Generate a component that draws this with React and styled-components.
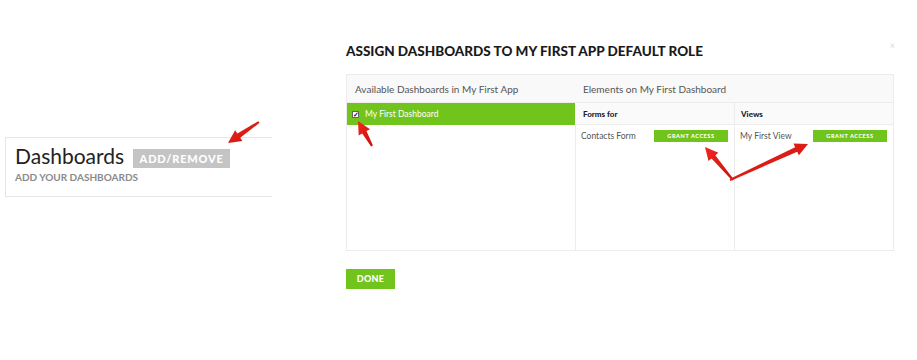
import React from "react";
import styled, { createGlobalStyle } from "styled-components";

const GlobalStyle = createGlobalStyle`
  html, body { margin: 0; padding: 0; background: #fff; }
  body { font-family: Lato, "Open Sans", sans-serif; color: #444; }
  * { box-sizing: border-box; }
`;

const GREEN = "#71c41b";

const Page = styled.div`
  position: relative;
  width: 917px;
  height: 360px;
  display: flex;
  align-items: flex-start;
  overflow: hidden;
`;

const Card = styled.div`
  margin: 137px 0 0 5px;
  width: 267px;
  height: 60px;
  border: 1px solid #e6e6e6;
  border-right: none;
  padding: 6px 0 0 9px;
`;

const CardTitleRow = styled.div`
  display: flex;
  align-items: flex-end;
  gap: 9px;
`;

const CardTitle = styled.div`
  font-size: 21px;
  line-height: 24px;
  font-weight: 400;
  color: #222;
`;

const GrayButton = styled.div`
  background: #c4c4c4;
  color: #fff;
  font-size: 11px;
  font-weight: 900;
  letter-spacing: 0.8px;
  height: 19px;
  line-height: 19px;
  width: 97px;
  text-align: center;
`;

const CardSub = styled.div`
  margin-top: 3px;
  font-size: 10px;
  line-height: 12px;
  font-weight: 700;
  color: #8a8a8a;
`;

const Modal = styled.div`
  margin: 41px 0 0 74px;
  width: 548px;
  display: flex;
  flex-direction: column;
`;

const TitleRow = styled.div`
  display: flex;
  justify-content: space-between;
  align-items: flex-start;
`;

const Title = styled.h2`
  margin: 2px 0 0 0;
  font-size: 13.5px;
  line-height: 17px;
  font-weight: 900;
  color: #1a1a1a;
`;

const Close = styled.span`
  font-size: 9px;
  line-height: 9px;
  color: #d8d8d8;
  margin-right: -1px;
`;

const Table = styled.div`
  margin-top: 14px;
  display: grid;
  grid-template-columns: 228px 159px 1fr;
  grid-template-rows: 28px 22px 125px;
  border: 1px solid #ececec;
`;

const HeadCell = styled.div`
  grid-column: ${(p) => p.$span || "auto"};
  background: #f9f9f9;
  border-bottom: 1px solid #ececec;
  font-size: 10px;
  color: #555;
  display: flex;
  align-items: center;
  padding-left: 8px;
`;

const DashRow = styled.div`
  background: ${GREEN};
  display: flex;
  align-items: center;
  gap: 6px;
  padding-left: 5px;
  color: #fff;
  font-size: 8.5px;
`;

const Check = styled.span`
  width: 7px;
  height: 7px;
  background: #fff;
  border: 1px solid #666;
  display: inline-flex;
  align-items: center;
  justify-content: center;
  font-size: 7px;
  line-height: 7px;
  font-weight: 900;
  color: #222;
`;

const SubHead = styled.div`
  background: #fafafa;
  border-bottom: 1px solid #ececec;
  border-left: ${(p) => (p.$divider ? "1px solid #ececec" : "none")};
  font-size: 8px;
  font-weight: 900;
  color: #222;
  display: flex;
  align-items: center;
  padding-left: ${(p) => (p.$divider ? "6px" : "8px")};
`;

const Empty = styled.div``;

const Panel = styled.div`
  border-left: 1px solid #ececec;
  display: flex;
  justify-content: space-between;
  align-items: flex-start;
  padding: 5px 6px 0 5px;
`;

const ItemName = styled.span`
  font-size: 8.5px;
  line-height: 12px;
  color: #555;
`;

const GrantButton = styled.span`
  background: ${GREEN};
  color: #fff;
  width: 74px;
  height: 12px;
  line-height: 12px;
  text-align: center;
  font-size: 5.5px;
  font-weight: 900;
  letter-spacing: 0.6px;
`;

const DoneButton = styled.div`
  margin-top: 18px;
  width: 49px;
  height: 20px;
  line-height: 20px;
  background: ${GREEN};
  color: #fff;
  font-size: 9px;
  font-weight: 900;
  text-align: center;
  letter-spacing: 0.3px;
`;

const Overlay = styled.svg`
  position: absolute;
  left: 0;
  top: 0;
  pointer-events: none;
`;

function arrowPoints([tx, ty], [hx, hy], w0 = 2, w1 = 5, L = 13, W = 13) {
  const dx = hx - tx;
  const dy = hy - ty;
  const len = Math.hypot(dx, dy);
  const ux = dx / len;
  const uy = dy / len;
  const nx = -uy;
  const ny = ux;
  const bx = hx - ux * L;
  const by = hy - uy * L;
  const pts = [
    [tx + (nx * w0) / 2, ty + (ny * w0) / 2],
    [bx + (nx * w1) / 2, by + (ny * w1) / 2],
    [bx + (nx * W) / 2, by + (ny * W) / 2],
    [hx, hy],
    [bx - (nx * W) / 2, by - (ny * W) / 2],
    [bx - (nx * w1) / 2, by - (ny * w1) / 2],
    [tx - (nx * w0) / 2, ty - (ny * w0) / 2],
  ];
  return pts.map((p) => p.map((v) => v.toFixed(1)).join(",")).join(" ");
}

const arrows = [
  { tail: [259, 122], tip: [228, 143] },
  { tail: [372, 146], tip: [358, 121] },
  { tail: [733, 180], tip: [705, 147] },
  { tail: [730, 180], tip: [808, 144] },
];

export default function App() {
  return (
    <Page>
      <GlobalStyle />
      <Card>
        <CardTitleRow>
          <CardTitle>Dashboards</CardTitle>
          <GrayButton>ADD/REMOVE</GrayButton>
        </CardTitleRow>
        <CardSub>ADD YOUR DASHBOARDS</CardSub>
      </Card>
      <Modal>
        <TitleRow>
          <Title>ASSIGN DASHBOARDS TO MY FIRST APP DEFAULT ROLE</Title>
          <Close>×</Close>
        </TitleRow>
        <Table>
          <HeadCell>Available Dashboards in My First App</HeadCell>
          <HeadCell $span="2 / 4">Elements on My First Dashboard</HeadCell>
          <DashRow>
            <Check>✓</Check>
            My First Dashboard
          </DashRow>
          <SubHead>Forms for</SubHead>
          <SubHead $divider>Views</SubHead>
          <Empty />
          <Panel>
            <ItemName>Contacts Form</ItemName>
            <GrantButton>GRANT ACCESS</GrantButton>
          </Panel>
          <Panel>
            <ItemName>My First View</ItemName>
            <GrantButton>GRANT ACCESS</GrantButton>
          </Panel>
        </Table>
        <DoneButton>DONE</DoneButton>
      </Modal>
      <Overlay width="917" height="360" viewBox="0 0 917 360">
        <defs>
          <linearGradient id="ag" x1="0" y1="0" x2="1" y2="1">
            <stop offset="0" stopColor="#f0281e" />
            <stop offset="1" stopColor="#c8100e" />
          </linearGradient>
        </defs>
        {arrows.map((a, i) => (
          <polygon key={i} points={arrowPoints(a.tail, a.tip)} fill="url(#ag)" />
        ))}
      </Overlay>
    </Page>
  );
}
